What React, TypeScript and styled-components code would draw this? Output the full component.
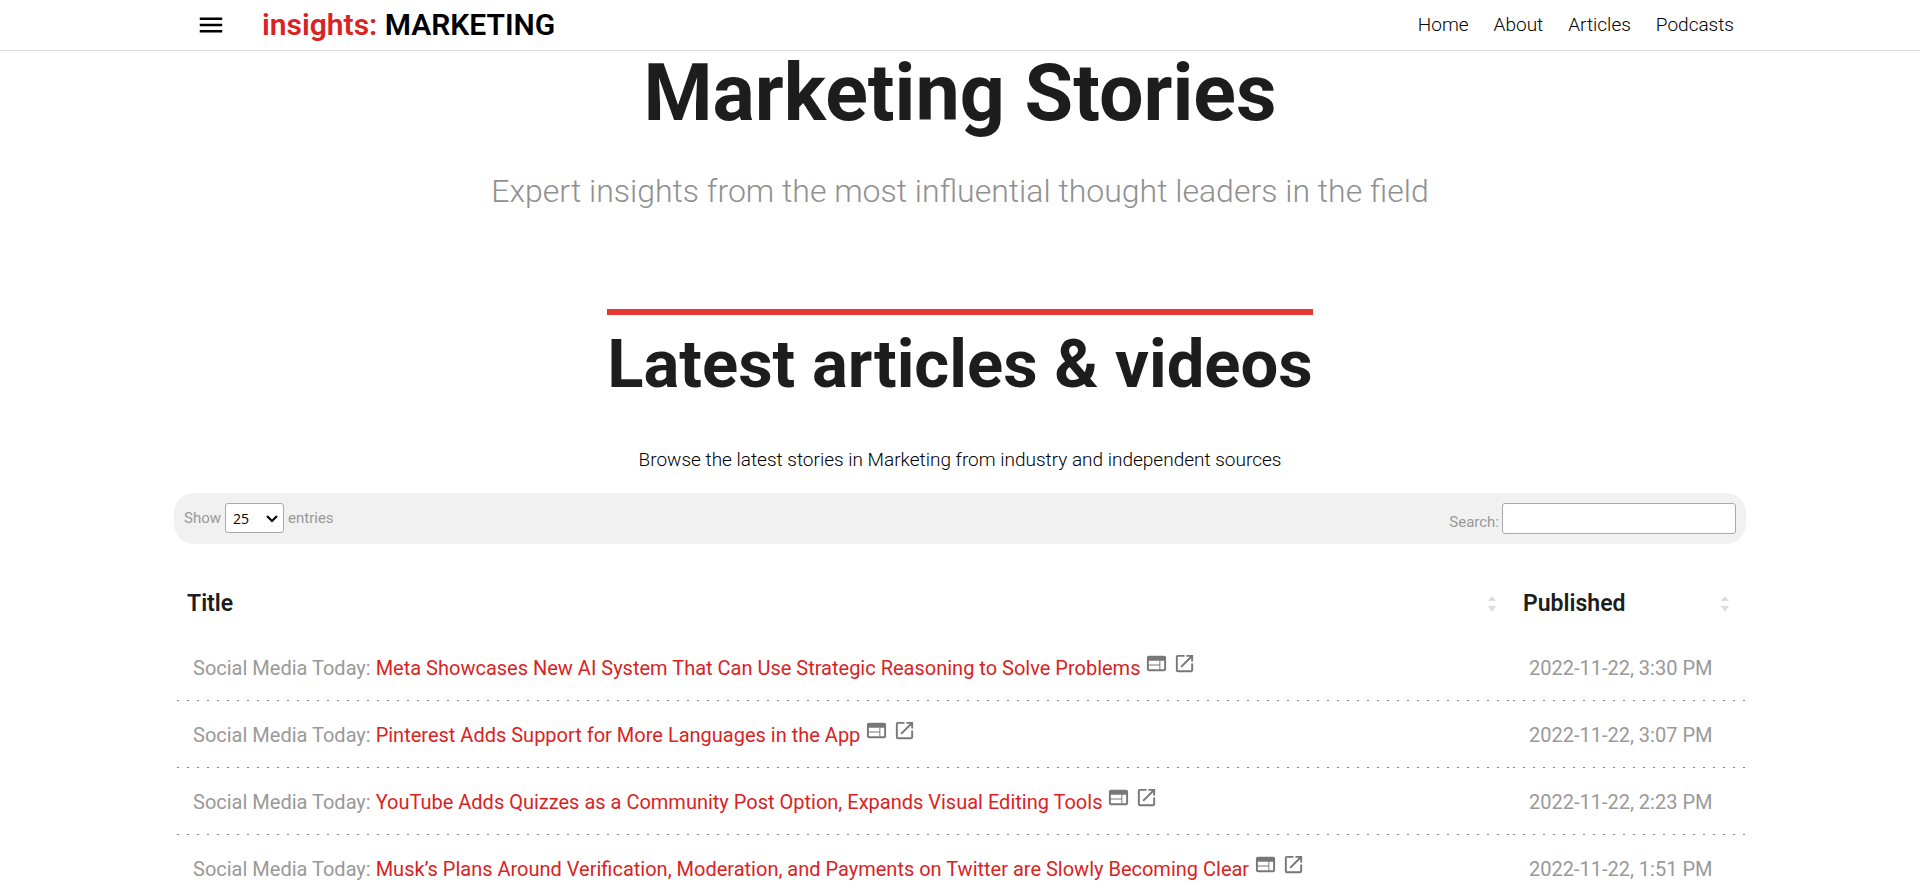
import React from 'react';
import styled, { createGlobalStyle } from 'styled-components';
import { MdMenu, MdWeb, MdOpenInNew } from 'react-icons/md';

const GlobalStyle = createGlobalStyle`
  *, *::before, *::after { box-sizing: border-box; }
  body {
    margin: 0;
    background: #fff;
    color: #1d1d1d;
    font-family: Roboto, "Liberation Sans", sans-serif;
    font-size: 18px;
  }
`;

const Page = styled.div`
  height: 100vh;
  overflow: hidden;
`;

const Header = styled.header`
  border-bottom: 1px solid #ddd;
  background: #fff;
`;

const HeaderInner = styled.div`
  display: flex;
  align-items: center;
  width: 82%;
  max-width: 1572px;
  height: 50px;
  margin: 0 auto;
  padding: 0 12px 0 22px;
`;

const MenuButton = styled.button`
  display: flex;
  margin: 0 36px 0 0;
  padding: 0;
  border: 0;
  background: none;
  color: #000;
  font-size: 30px;
`;

const Brand = styled.a`
  color: #000;
  font-size: 30px;
  font-weight: 600;
  line-height: 48px;
  text-decoration: none;
`;

const BrandAccent = styled.span`
  color: #d92323;
`;

const Nav = styled.nav`
  display: flex;
  gap: 25px;
  margin-left: auto;
`;

const NavLink = styled.a`
  color: #000;
  font-size: 19px;
  font-weight: 300;
  line-height: 24px;
  text-decoration: none;
`;

const Main = styled.main`
  width: 82%;
  max-width: 1572px;
  margin: 0 auto;
`;

const Hero = styled.section`
  padding-top: 2px;
  text-align: center;
`;

const HeroTitle = styled.h1`
  margin: 0;
  font-size: 79px;
  font-weight: 700;
  line-height: 80px;
`;

const HeroLead = styled.p`
  margin: 38px 0 0;
  color: #909090;
  font-size: 32px;
  font-weight: 300;
  line-height: 40px;
`;

const Latest = styled.section`
  display: flex;
  flex-direction: column;
  align-items: center;
  margin-top: 98px;
`;

const SectionTitle = styled.h2`
  margin: 0;
  padding-top: 15px;
  border-top: 6px solid #e53935;
  font-size: 67px;
  font-weight: 700;
  line-height: 68px;
`;

const Intro = styled.p`
  margin: 50px 0 0;
  color: #000;
  font-size: 19px;
  font-weight: 300;
  line-height: 24px;
`;

const Toolbar = styled.div`
  display: flex;
  justify-content: space-between;
  align-items: flex-start;
  margin-top: 21px;
  padding: 10px;
  border-radius: 20px;
  background: #f1f1f1;
  color: #999;
  font-size: 15px;
`;

const Field = styled.label`
  display: flex;
  align-items: center;
  gap: 4px;
`;

const SearchField = styled(Field)`
  align-items: flex-end;
  gap: 3px;
  line-height: 24px;
`;

const SelectBox = styled.span`
  position: relative;
  display: flex;
`;

const LengthSelect = styled.select`
  appearance: none;
  width: 59px;
  height: 30px;
  padding: 0 7px;
  border: 1px solid #aaa;
  border-radius: 3px;
  background: #fff;
  color: #000;
  font-family: "Open Sans", sans-serif;
  font-size: 14px;
`;

const Chevron = styled.svg`
  position: absolute;
  top: 12px;
  right: 6px;
  width: 12px;
  height: 8px;
  fill: none;
  stroke: #000;
  stroke-width: 2;
  pointer-events: none;
`;

const SearchInput = styled.input`
  width: 234px;
  height: 31px;
  padding: 5px;
  border: 1px solid #aaa;
  border-radius: 3px;
  background: #fff;
  font: inherit;
`;

const StoryTable = styled.table`
  width: 100%;
  margin-top: 29px;
  padding-left: 3px;
  border-collapse: separate;
  border-spacing: 0;
  text-align: left;
`;

const HeadCell = styled.th<{ $width?: string }>`
  width: ${({ $width }) => $width ?? 'auto'};
  height: 61px;
  padding: 0 17px 0 10px;
  font-size: 23px;
  font-weight: 600;
`;

const SortRow = styled.div`
  display: flex;
  align-items: center;
  justify-content: space-between;
`;

const SortIcon = styled.svg`
  width: 8px;
  height: 16px;
  fill: #ddd;
`;

const Cell = styled.td`
  height: 67px;
  padding: 0 16px;
  background: repeating-linear-gradient(90deg, #808080 0 2px, transparent 2px 10px) left bottom / 100% 1px no-repeat;
  color: #999;
  font-size: 20px;
  line-height: 30px;
`;

const StoryLink = styled.a`
  color: #d92323;
  text-decoration: none;
`;

const IconLink = styled.a`
  display: inline-block;
  margin-left: 5px;
  color: #777;
  font-size: 23px;
  line-height: 1;
  svg { display: block; }
`;

const stories = [
  { title: 'Meta Showcases New AI System That Can Use Strategic Reasoning to Solve Problems', date: '2022-11-22, 3:30 PM' },
  { title: 'Pinterest Adds Support for More Languages in the App', date: '2022-11-22, 3:07 PM' },
  { title: 'YouTube Adds Quizzes as a Community Post Option, Expands Visual Editing Tools', date: '2022-11-22, 2:23 PM' },
  { title: 'Musk’s Plans Around Verification, Moderation, and Payments on Twitter are Slowly Becoming Clear', date: '2022-11-22, 1:51 PM' },
];

const Sorter = () => (
  <SortIcon viewBox="0 0 8 16" aria-hidden="true">
    <path d="M4 0L8 5H0zM0 10h8l-4 6z" />
  </SortIcon>
);

export default function App() {
  return (
    <Page>
      <GlobalStyle />
      <Header>
        <HeaderInner>
          <MenuButton aria-label="Menu"><MdMenu /></MenuButton>
          <Brand href="#"><BrandAccent>insights:</BrandAccent> MARKETING</Brand>
          <Nav>
            {['Home', 'About', 'Articles', 'Podcasts'].map((item) => (
              <NavLink key={item} href="#">{item}</NavLink>
            ))}
          </Nav>
        </HeaderInner>
      </Header>
      <Main>
        <Hero>
          <HeroTitle>Marketing Stories</HeroTitle>
          <HeroLead>Expert insights from the most influential thought leaders in the field</HeroLead>
        </Hero>
        <Latest>
          <SectionTitle>Latest articles &amp; videos</SectionTitle>
          <Intro>Browse the latest stories in Marketing from industry and independent sources</Intro>
        </Latest>
        <Toolbar>
          <Field>
            Show
            <SelectBox>
              <LengthSelect defaultValue="25">
                <option>10</option>
                <option>25</option>
                <option>50</option>
                <option>100</option>
              </LengthSelect>
              <Chevron viewBox="0 0 12 8" aria-hidden="true"><path d="M1 1l5 5 5-5" /></Chevron>
            </SelectBox>
            entries
          </Field>
          <SearchField>
            Search:
            <SearchInput type="search" />
          </SearchField>
        </Toolbar>
        <StoryTable>
          <thead>
            <tr>
              <HeadCell><SortRow>Title<Sorter /></SortRow></HeadCell>
              <HeadCell $width="233px"><SortRow>Published<Sorter /></SortRow></HeadCell>
            </tr>
          </thead>
          <tbody>
            {stories.map((story) => (
              <tr key={story.title}>
                <Cell>
                  Social Media Today: <StoryLink href="#">{story.title}</StoryLink>
                  <IconLink href="#" aria-label="Preview"><MdWeb /></IconLink>
                  <IconLink href="#" aria-label="Open in new tab"><MdOpenInNew /></IconLink>
                </Cell>
                <Cell>{story.date}</Cell>
              </tr>
            ))}
          </tbody>
        </StoryTable>
      </Main>
    </Page>
  );
}
